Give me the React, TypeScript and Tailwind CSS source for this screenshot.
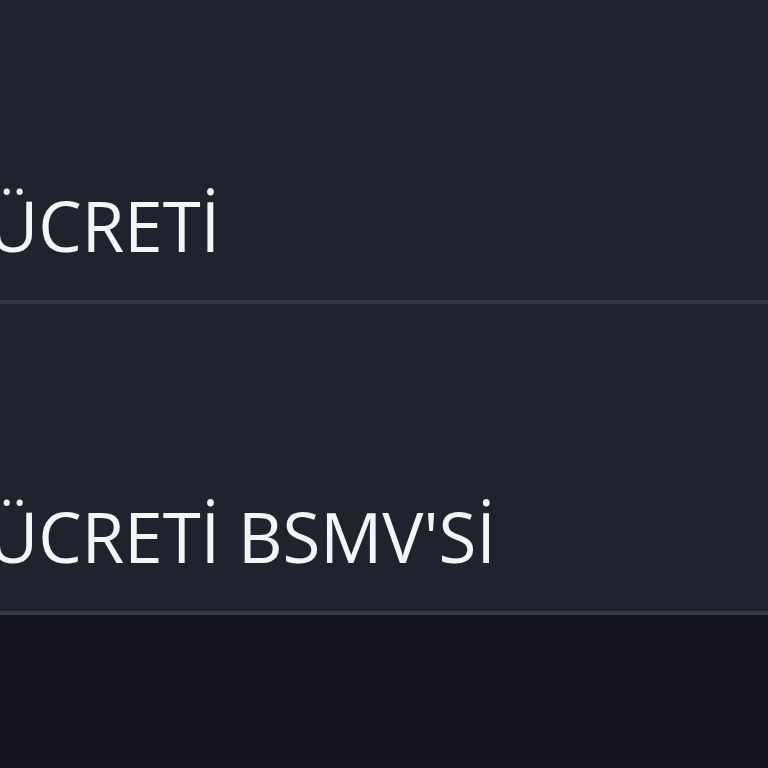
export default function App() {
  return (
    <div
      className="flex h-screen w-full flex-col overflow-hidden bg-[#13131d] text-white"
      style={{ fontFamily: '"Open Sans", "Noto Sans", sans-serif' }}
    >
      <div className="flex h-[304px] shrink-0 items-end border-b-4 border-[#353844] bg-[#20222d] pb-[40px]">
        <span className="ml-[-12px] whitespace-nowrap text-[69px] leading-none text-[#f4f5f7]">ÜCRETİ</span>
      </div>
      <div className="flex h-[311px] shrink-0 items-end border-b-4 border-[#353844] bg-[#20222d] pb-[40px]">
        <span className="ml-[-12px] whitespace-nowrap text-[69px] leading-none text-[#f4f5f7]">ÜCRETİ BSMV'Sİ</span>
      </div>
    </div>
  );
}
